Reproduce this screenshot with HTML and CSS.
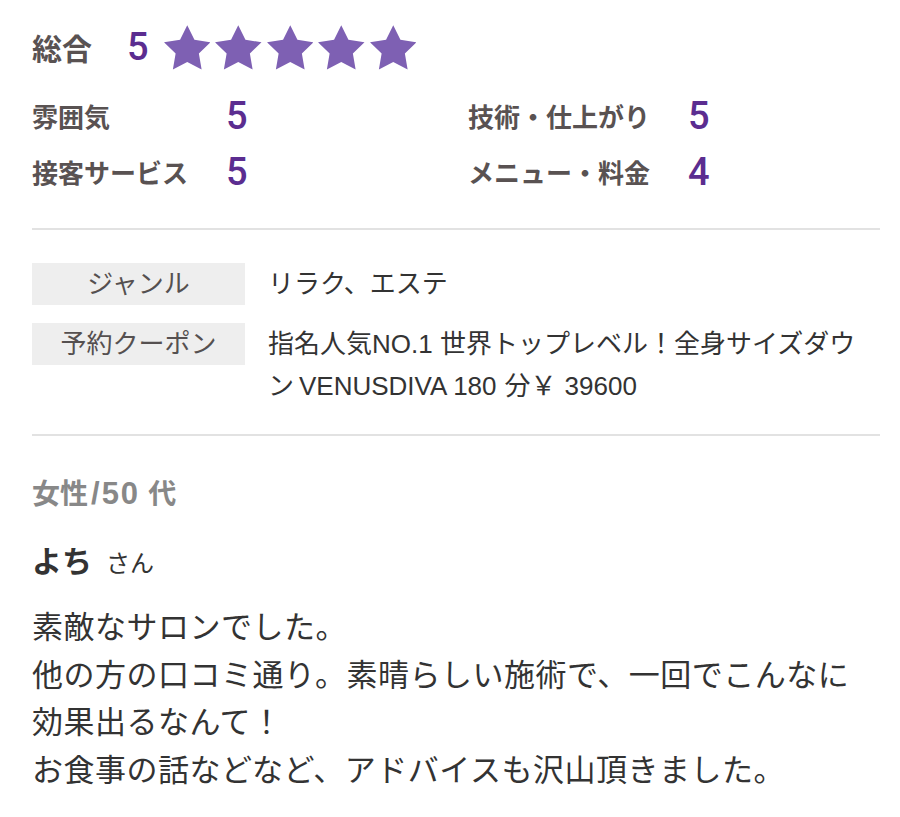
FILE: index.html
```html
<!DOCTYPE html>
<html lang="ja">
<head>
<meta charset="utf-8">
<link rel="stylesheet" href="styles.css">
</head>
<body>
<div class="review">
  <div class="total">
    <span class="total-label">総合</span>
    <span class="total-num">5</span>
    <span class="stars">
      <svg class="star" viewBox="2 2 20 19.1"><polygon points="12,2 15.09,8.26 22,9.27 17,14.14 18.18,21.02 12,17.77 5.82,21.02 7,14.14 2,9.27 8.91,8.26"/></svg>
      <svg class="star" viewBox="2 2 20 19.1"><polygon points="12,2 15.09,8.26 22,9.27 17,14.14 18.18,21.02 12,17.77 5.82,21.02 7,14.14 2,9.27 8.91,8.26"/></svg>
      <svg class="star" viewBox="2 2 20 19.1"><polygon points="12,2 15.09,8.26 22,9.27 17,14.14 18.18,21.02 12,17.77 5.82,21.02 7,14.14 2,9.27 8.91,8.26"/></svg>
      <svg class="star" viewBox="2 2 20 19.1"><polygon points="12,2 15.09,8.26 22,9.27 17,14.14 18.18,21.02 12,17.77 5.82,21.02 7,14.14 2,9.27 8.91,8.26"/></svg>
      <svg class="star" viewBox="2 2 20 19.1"><polygon points="12,2 15.09,8.26 22,9.27 17,14.14 18.18,21.02 12,17.77 5.82,21.02 7,14.14 2,9.27 8.91,8.26"/></svg>
    </span>
  </div>

  <div class="sub">
    <span class="sub-label">雰囲気</span><span class="sub-num">5</span>
    <span class="sub-label">技術・仕上がり</span><span class="sub-num">5</span>
    <span class="sub-label">接客サービス</span><span class="sub-num">5</span>
    <span class="sub-label">メニュー・料金</span><span class="sub-num">4</span>
  </div>

  <hr class="divider">

  <div class="info">
    <div class="info-row">
      <div class="info-label">ジャンル</div>
      <div class="info-value">リラク、エステ</div>
    </div>
    <div class="info-row">
      <div class="info-label">予約クーポン</div>
      <div class="info-value"><span>指名人気NO.1 世界トップレベル！全身サイズダウ</span><span>ン</span><span class="lat">VENUSDIVA 180</span><span>分￥</span><span class="lat-l">39600</span></div>
    </div>
  </div>

  <hr class="divider">

  <div class="attr">女性<span class="attr-num">/50</span>代</div>
  <div class="name"><span class="name-main">よち</span><span class="name-suffix">さん</span></div>
  <p class="body">素敵なサロンでした。<br>他の方の口コミ通り。素晴らしい施術で、一回でこんなに効果出るなんて！<br>お食事の話などなど、アドバイスも沢山頂きました。</p>
</div>
</body>
</html>
```

FILE: styles.css
```css
html, body {
  margin: 0;
  padding: 0;
  background: #ffffff;
}
body {
  font-family: "Liberation Sans", "Noto Sans CJK JP", sans-serif;
  color: #333333;
}
.review {
  width: 848px;
  padding: 22px 20px 0 32px;
}
.total {
  display: flex;
  align-items: center;
  height: 50px;
}
.total-label {
  font-family: "Noto Sans CJK JP", sans-serif;
  font-size: 30px;
  font-weight: 700;
  color: #595252;
  line-height: 1;
}
.total-num {
  font-family: Roboto, "Liberation Sans", sans-serif;
  font-weight: 500;
  font-size: 38px;
  color: #5b2d90;
  margin-left: 35px;
  line-height: 1;
}
.stars {
  display: flex;
  gap: 5px;
  margin-left: 15px;
}
.star {
  width: 46.5px;
  height: 45px;
  fill: #7e60b3;
}
.sub {
  display: grid;
  grid-template-columns: 194px 242px 220px auto;
  grid-auto-rows: 56px;
  align-items: center;
  margin-top: 16px;
}
.sub-label {
  font-family: "Noto Sans CJK JP", sans-serif;
  font-size: 26px;
  font-weight: 700;
  color: #595252;
  line-height: 1;
}
.sub-num {
  font-family: Roboto, "Liberation Sans", sans-serif;
  font-weight: 500;
  font-size: 38px;
  color: #5b2d90;
  line-height: 1;
}
.divider {
  border: 0;
  height: 2px;
  background: #e2e2e2;
  margin: 28px 0 0 0;
}
.info {
  margin-top: 33px;
  display: flex;
  flex-direction: column;
  gap: 18px;
}
.info-row {
  display: flex;
  align-items: flex-start;
}
.info-label {
  width: 213px;
  flex: none;
  height: 42px;
  line-height: 42px;
  text-align: center;
  background: #eeeeee;
  font-size: 26px;
  color: #555050;
}
.info-value {
  margin-left: 23px;
  font-size: 26px;
  line-height: 42px;
  color: #333333;
}
.lat {
  margin: 0 8px 0 5px;
}
.lat-l {
  margin-left: 8px;
}
.info + .divider {
  margin-top: 27px;
}
.attr {
  margin-top: 38px;
  font-size: 28px;
  font-weight: 700;
  line-height: 40px;
  color: #888888;
}
.attr-num {
  font-size: 31px;
  letter-spacing: 2px;
  margin: 0 8px 0 3px;
}
.name {
  margin-top: 27px;
  line-height: 40px;
  display: flex;
  align-items: baseline;
}
.name-main {
  font-size: 30px;
  font-weight: 700;
  color: #333333;
}
.name-suffix {
  font-size: 24px;
  margin-left: 14px;
  color: #333333;
}
.body {
  margin: 20px 0 0 0;
  font-size: 31px;
  letter-spacing: 0.5px;
  line-height: 47.5px;
  color: #333333;
}
```
